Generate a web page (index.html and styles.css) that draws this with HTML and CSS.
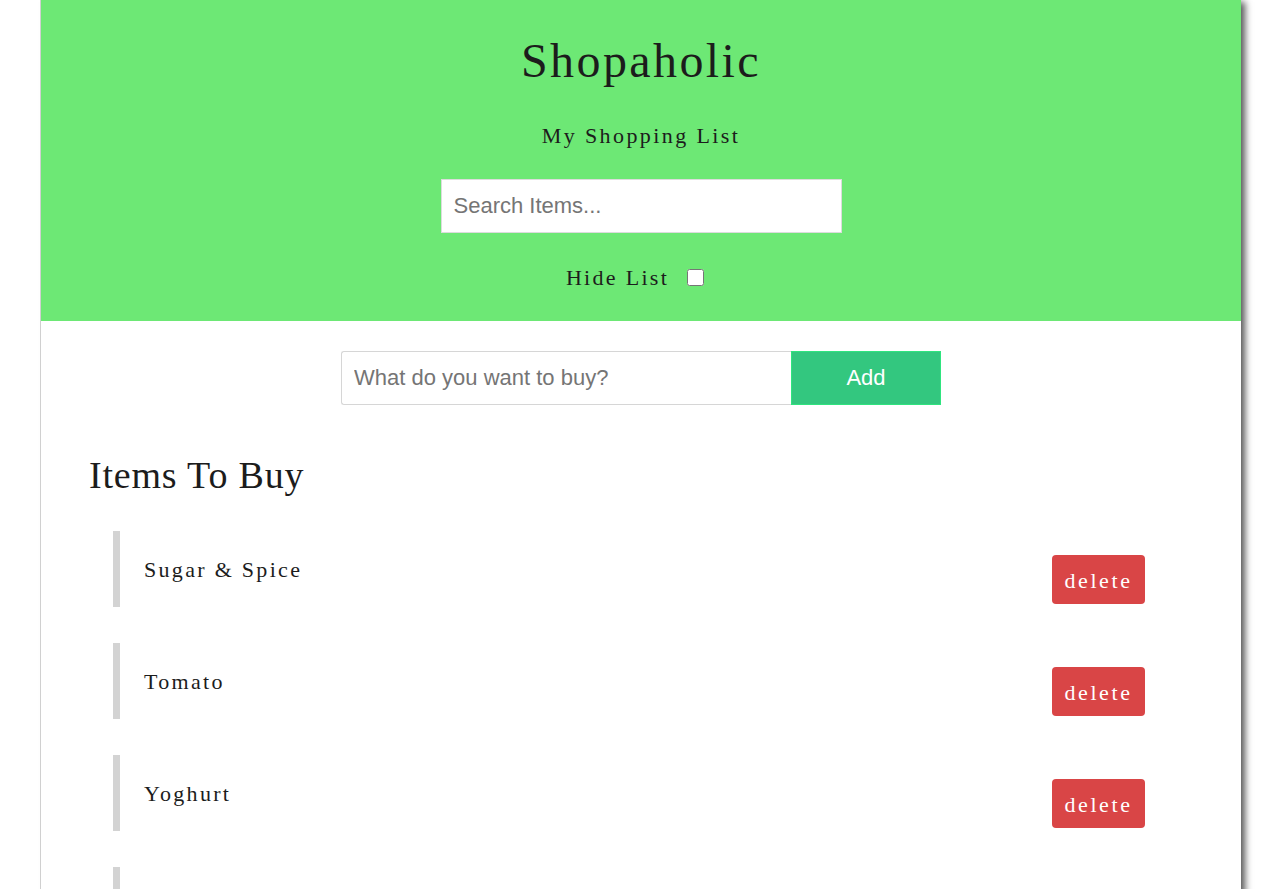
FILE: index.html
```html
<!DOCTYPE html>
<html lang="en">
<head>
<meta charset="utf-8">
<title>Shopaholic</title>
<link rel="stylesheet" href="styles.css">
</head>
<body>
<div class="wrapper">
  <header class="banner">
    <h1 class="title">Shopaholic</h1>
    <p class="subtitle">My Shopping List</p>
    <form class="search-form">
      <input class="search-input" type="text" placeholder="Search Items...">
    </form>
    <label class="hide-row">Hide List <input class="hide-check" type="checkbox"></label>
  </header>

  <form class="add-form">
    <input class="add-input" type="text" placeholder="What do you want to buy?">
    <button class="add-btn" type="button">Add</button>
  </form>

  <section class="list-section">
    <h2 class="list-title">Items To Buy</h2>
    <ul class="items">
      <li class="item"><span class="name">Sugar &amp; Spice</span><span class="delete">delete</span></li>
      <li class="item"><span class="name">Tomato</span><span class="delete">delete</span></li>
      <li class="item"><span class="name">Yoghurt</span><span class="delete">delete</span></li>
      <li class="item"><span class="name">Milk</span><span class="delete">delete</span></li>
    </ul>
  </section>
</div>
</body>
</html>
```

FILE: styles.css
```css
html, body {
  margin: 0;
  padding: 0;
  background: #fff;
}

body {
  font-family: "Liberation Serif", "Times New Roman", serif;
  color: #1c1c1c;
}

.wrapper {
  margin-left: 40px;
  width: 1200px;
  min-height: 1100px;
  border-left: 1px solid #d0d0d0;
  background: #fff;
  box-shadow: 6px 0 7px -2px #555;
}

.banner {
  background: #6de875;
  padding: 33px 0 29px;
  display: flex;
  flex-direction: column;
  align-items: center;
}

.title {
  margin: 0;
  font-size: 48px;
  line-height: 56px;
  font-weight: normal;
  letter-spacing: 2.4px;
}

.subtitle {
  margin: 33px 0 0;
  font-size: 22px;
  line-height: 28px;
  letter-spacing: 2.4px;
}

.search-form {
  margin: 29px 0 0;
}

.search-input {
  box-sizing: border-box;
  width: 401px;
  height: 54px;
  border: 1px solid #dcdcdc;
  padding: 0 12px;
  font-family: "Liberation Sans", Arial, sans-serif;
  font-size: 22px;
  color: #333;
  background: #fff;
  outline: none;
}

.search-input::placeholder,
.add-input::placeholder {
  color: #757575;
}

.hide-row {
  margin-top: 31px;
  display: flex;
  align-items: center;
  font-size: 22px;
  line-height: 28px;
  letter-spacing: 2.3px;
}

.hide-check {
  width: 17px;
  height: 17px;
  margin: 0 12px 2px 18px;
}

.add-form {
  margin: 30px 0 0;
  display: flex;
  justify-content: center;
}

.add-input {
  box-sizing: border-box;
  width: 450px;
  height: 54px;
  border: 1px solid #d6d6d6;
  border-right: none;
  border-radius: 3px 0 0 3px;
  padding: 0 12px;
  font-family: "Liberation Sans", Arial, sans-serif;
  font-size: 22px;
  outline: none;
}

.add-btn {
  box-sizing: border-box;
  width: 150px;
  height: 54px;
  border: 1px solid #2fe47f;
  background: #33c77f;
  color: #fff;
  font-family: "Liberation Sans", Arial, sans-serif;
  font-size: 22px;
  padding: 0;
}

.list-section {
  padding: 48px 96px 0 48px;
}

.list-title {
  margin: 0;
  font-size: 38px;
  line-height: 44px;
  font-weight: normal;
  letter-spacing: 0.8px;
}

.items {
  list-style: none;
  margin: 34px 0 0 24px;
  padding: 0;
}

.item {
  box-sizing: border-box;
  min-height: 76px;
  margin-bottom: 36px;
  border-left: 7px solid #d3d3d3;
  padding: 24px 0 0 24px;
  display: flex;
  justify-content: space-between;
  align-items: flex-start;
}

.name {
  padding-top: 1px;
  font-size: 22px;
  line-height: 28px;
  letter-spacing: 2.3px;
}

.delete {
  box-sizing: border-box;
  height: 49px;
  width: 93px;
  padding-top: 12px;
  text-align: center;
  background: #d94546;
  color: #fff;
  border-radius: 4px;
  font-size: 22px;
  line-height: 28px;
  letter-spacing: 2.6px;
}
```
